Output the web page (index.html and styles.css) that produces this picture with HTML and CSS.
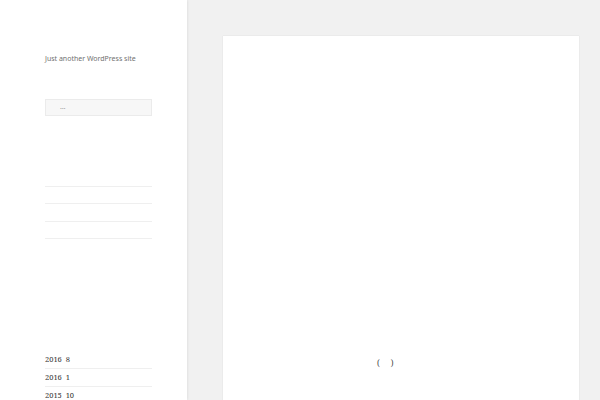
FILE: index.html
```html
<!DOCTYPE html>
<html>
<head>
<meta charset="utf-8">
<link rel="stylesheet" href="styles.css">
</head>
<body>
<div class="page">
  <aside class="sidebar">
    <p class="desc">Just another WordPress site</p>
    <div class="search">…</div>
    <ul class="menu">
      <li></li>
      <li></li>
      <li></li>
      <li></li>
    </ul>
    <ul class="archive">
      <li>2016&nbsp;&nbsp;8</li>
      <li>2016&nbsp;&nbsp;1</li>
      <li>2015&nbsp;&nbsp;10</li>
    </ul>
  </aside>
  <main class="main">
    <article class="card">
      <div class="paren"><span>(</span><span>)</span></div>
    </article>
  </main>
</div>
</body>
</html>
```
FILE: styles.css
```css
html, body {
  margin: 0;
  padding: 0;
  height: 100%;
  overflow: hidden;
}
body {
  background: #f1f1f1;
  font-family: "Noto Sans", "Liberation Sans", sans-serif;
}
.page {
  display: flex;
  height: 400px;
  overflow: hidden;
}
.sidebar {
  width: 187px;
  flex: none;
  background: #fff;
  box-shadow: 0 0 3px rgba(0,0,0,0.12);
  padding: 0 35px 0 45px;
  box-sizing: border-box;
  position: relative;
  z-index: 1;
}
.desc {
  margin: 53px 0 0 0;
  font-size: 7px;
  line-height: 12px;
  color: #707070;
}
.search {
  margin-top: 34px;
  height: 17px;
  box-sizing: border-box;
  background: #f7f7f7;
  border: 1px solid #ebebeb;
  font-size: 7px;
  line-height: 14px;
  color: #999;
  padding-left: 14px;
}
.menu {
  list-style: none;
  margin: 70px 0 0 0;
  padding: 0;
}
.menu li {
  height: 16.4px;
  border-top: 1px solid #efefef;
}
.menu li:last-child {
  height: 0;
}
.archive {
  list-style: none;
  margin: 112px 0 0 0;
  padding: 0;
  font-family: "Noto Serif", "DejaVu Serif", "Liberation Serif", serif;
  font-size: 7.5px;
  color: #333;
}
.archive li {
  height: 17px;
  line-height: 16px;
  border-bottom: 1px solid #efefef;
}
.main {
  flex: 1;
  padding: 36px 21px 0 36px;
}
.card {
  background: #fff;
  height: 364px;
  box-shadow: 0 0 1px rgba(0,0,0,0.15);
}
.paren {
  display: flex;
  gap: 11px;
  padding-left: 154px;
  padding-top: 321px;
  font-family: "Noto Serif", "DejaVu Serif", serif;
  font-size: 8px;
  color: #444;
}
```
